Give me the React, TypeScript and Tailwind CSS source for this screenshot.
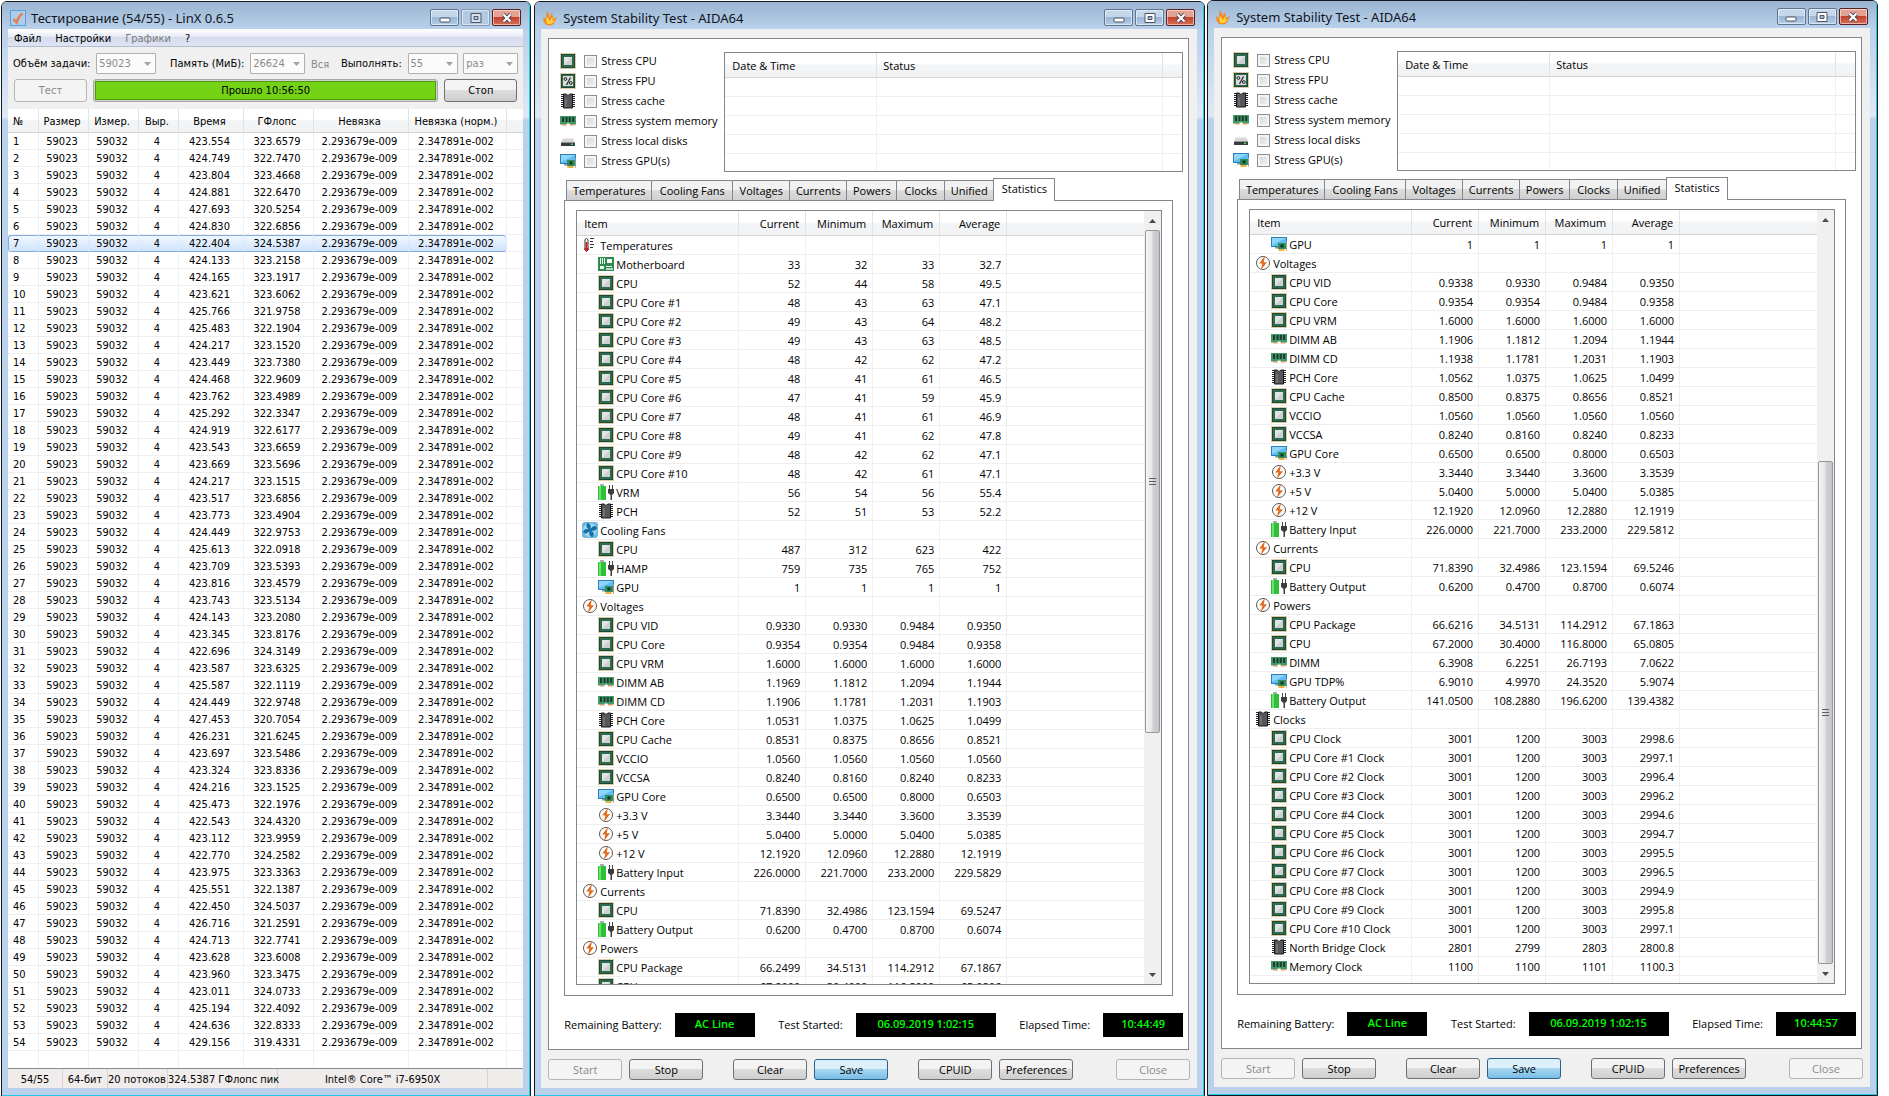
import type { ReactNode } from 'react'
import clsx from 'clsx'

type IconName = 'cpu' | 'fpu' | 'chip' | 'ram' | 'disk' | 'gpu' | 'temp' | 'board' | 'battery' | 'fan' | 'volt'

// [time, gflops] for every finished run
const RUNS = `423.554 323.6579|424.749 322.7470|423.804 323.4668|424.881 322.6470|427.693 320.5254|424.830 322.6856
422.404 324.5387|424.133 323.2158|424.165 323.1917|423.621 323.6062|425.766 321.9758|425.483 322.1904
424.217 323.1520|423.449 323.7380|424.468 322.9609|423.762 323.4989|425.292 322.3347|424.919 322.6177
423.543 323.6659|423.669 323.5696|424.217 323.1515|423.517 323.6856|423.773 323.4904|424.449 322.9753
425.613 322.0918|423.709 323.5393|423.816 323.4579|423.743 323.5134|424.143 323.2080|423.345 323.8176
422.696 324.3149|423.587 323.6325|425.587 322.1119|424.449 322.9748|427.453 320.7054|426.231 321.6245
423.697 323.5486|423.324 323.8336|424.216 323.1525|425.473 322.1976|422.543 324.4320|423.112 323.9959
422.770 324.2582|423.975 323.3363|425.551 322.1387|422.450 324.5037|426.716 321.2591|424.713 322.7741
423.628 323.6008|423.960 323.3475|423.011 324.0733|425.194 322.4092|424.636 322.8333|429.156 319.4331`
  .split(/[|\n]/)
  .map(r => r.trim().split(' '))

const STATS_A = `temp;Temperatures
board;Motherboard;33;32;33;32.7
cpu;CPU;52;44;58;49.5
cpu;CPU Core #1;48;43;63;47.1
cpu;CPU Core #2;49;43;64;48.2
cpu;CPU Core #3;49;43;63;48.5
cpu;CPU Core #4;48;42;62;47.2
cpu;CPU Core #5;48;41;61;46.5
cpu;CPU Core #6;47;41;59;45.9
cpu;CPU Core #7;48;41;61;46.9
cpu;CPU Core #8;49;41;62;47.8
cpu;CPU Core #9;48;42;62;47.1
cpu;CPU Core #10;48;42;61;47.1
battery;VRM;56;54;56;55.4
chip;PCH;52;51;53;52.2
fan;Cooling Fans
cpu;CPU;487;312;623;422
battery;HAMP;759;735;765;752
gpu;GPU;1;1;1;1
volt;Voltages
cpu;CPU VID;0.9330;0.9330;0.9484;0.9350
cpu;CPU Core;0.9354;0.9354;0.9484;0.9358
cpu;CPU VRM;1.6000;1.6000;1.6000;1.6000
ram;DIMM AB;1.1969;1.1812;1.2094;1.1944
ram;DIMM CD;1.1906;1.1781;1.2031;1.1903
chip;PCH Core;1.0531;1.0375;1.0625;1.0499
cpu;CPU Cache;0.8531;0.8375;0.8656;0.8521
cpu;VCCIO;1.0560;1.0560;1.0560;1.0560
cpu;VCCSA;0.8240;0.8160;0.8240;0.8233
gpu;GPU Core;0.6500;0.6500;0.8000;0.6503
volt;+3.3 V;3.3440;3.3440;3.3600;3.3539
volt;+5 V;5.0400;5.0000;5.0400;5.0385
volt;+12 V;12.1920;12.0960;12.2880;12.1919
battery;Battery Input;226.0000;221.7000;233.2000;229.5829
volt;Currents
cpu;CPU;71.8390;32.4986;123.1594;69.5247
battery;Battery Output;0.6200;0.4700;0.8700;0.6074
volt;Powers
cpu;CPU Package;66.2499;34.5131;114.2912;67.1867
cpu;CPU;67.2000;30.4000;116.8000;65.0806`

const STATS_B = `gpu;GPU;1;1;1;1
volt;Voltages
cpu;CPU VID;0.9338;0.9330;0.9484;0.9350
cpu;CPU Core;0.9354;0.9354;0.9484;0.9358
cpu;CPU VRM;1.6000;1.6000;1.6000;1.6000
ram;DIMM AB;1.1906;1.1812;1.2094;1.1944
ram;DIMM CD;1.1938;1.1781;1.2031;1.1903
chip;PCH Core;1.0562;1.0375;1.0625;1.0499
cpu;CPU Cache;0.8500;0.8375;0.8656;0.8521
cpu;VCCIO;1.0560;1.0560;1.0560;1.0560
cpu;VCCSA;0.8240;0.8160;0.8240;0.8233
gpu;GPU Core;0.6500;0.6500;0.8000;0.6503
volt;+3.3 V;3.3440;3.3440;3.3600;3.3539
volt;+5 V;5.0400;5.0000;5.0400;5.0385
volt;+12 V;12.1920;12.0960;12.2880;12.1919
battery;Battery Input;226.0000;221.7000;233.2000;229.5812
volt;Currents
cpu;CPU;71.8390;32.4986;123.1594;69.5246
battery;Battery Output;0.6200;0.4700;0.8700;0.6074
volt;Powers
cpu;CPU Package;66.6216;34.5131;114.2912;67.1863
cpu;CPU;67.2000;30.4000;116.8000;65.0805
ram;DIMM;6.3908;6.2251;26.7193;7.0622
gpu;GPU TDP%;6.9010;4.9970;24.3520;5.9074
battery;Battery Output;141.0500;108.2880;196.6200;139.4382
chip;Clocks
cpu;CPU Clock;3001;1200;3003;2998.6
cpu;CPU Core #1 Clock;3001;1200;3003;2997.1
cpu;CPU Core #2 Clock;3001;1200;3003;2996.4
cpu;CPU Core #3 Clock;3001;1200;3003;2996.2
cpu;CPU Core #4 Clock;3001;1200;3003;2994.6
cpu;CPU Core #5 Clock;3001;1200;3003;2994.7
cpu;CPU Core #6 Clock;3001;1200;3003;2995.5
cpu;CPU Core #7 Clock;3001;1200;3003;2996.5
cpu;CPU Core #8 Clock;3001;1200;3003;2994.9
cpu;CPU Core #9 Clock;3001;1200;3003;2995.8
cpu;CPU Core #10 Clock;3001;1200;3003;2997.1
chip;North Bridge Clock;2801;2799;2803;2800.8
ram;Memory Clock;1100;1100;1101;1100.3`

const STRESS: [IconName, string][] = [
  ['cpu', 'Stress CPU'],
  ['fpu', 'Stress FPU'],
  ['chip', 'Stress cache'],
  ['ram', 'Stress system memory'],
  ['disk', 'Stress local disks'],
  ['gpu', 'Stress GPU(s)'],
]

const TABS = [
  ['Temperatures', 'w-[86px]'],
  ['Cooling Fans', 'w-[82px]'],
  ['Voltages', 'w-[58px]'],
  ['Currents', 'w-[58px]'],
  ['Powers', 'w-[51px]'],
  ['Clocks', 'w-[49px]'],
  ['Unified', 'w-[50px]'],
  ['Statistics', 'w-[62px]'],
]

function Icon({ name }: { name: IconName }) {
  return (
    <svg width="16" height="16" viewBox="0 0 16 16" className="block shrink-0" aria-hidden="true">
      {(name === 'cpu' || name === 'fpu') && (
        <>
          <rect x="0.5" y="0.5" width="15" height="15" fill="none" stroke="#b9974a" strokeDasharray="1 1" />
          <rect x="1" y="1" width="14" height="14" fill="#2f6a50" />
          <rect x="1.5" y="1.5" width="13" height="13" fill="none" stroke="#1d4a37" />
          <rect x="4" y="4" width="8" height="8" fill="#e2e4e2" />
          <path d="M12 4v8H4z" fill="#cdd1ce" />
        </>
      )}
      {name === 'fpu' && (
        <>
          <rect x="3" y="3" width="10" height="10" fill="#d9dcda" />
          <path d="M10.5 4.5l-4 7.5" stroke="#222" strokeWidth="1.2" />
          <circle cx="5.4" cy="6" r="1.4" fill="none" stroke="#222" />
          <circle cx="10.8" cy="10" r="1.4" fill="none" stroke="#222" />
        </>
      )}
      {name === 'chip' && (
        <>
          <path d="M2 1v14M14 1v14" stroke="#222" strokeWidth="2" strokeDasharray="1 1" />
          <path d="M3.500 1H6q2 3 4 0h2.500v14h-9z" fill="#55575b" stroke="#17181a" />
          <path d="M5 5h2v9H5z" fill="#6d6f73" />
        </>
      )}
      {name === 'ram' && (
        <>
          <path d="M0 3h16v8.500H9.500v-1h-3v1H0z" fill="#3f9a68" />
          <path d="M2 4h2v5H2zM5.500 4h2v5h-2zM8.800 4h2v5h-2zM12.200 4h2v5h-2z" fill="#1f3a2e" />
          <path d="M2 11h4.500v1.500H2zM10 11h4.500v1.500H10z" fill="#d99a66" />
        </>
      )}
      {name === 'disk' && (
        <>
          <path d="M2.500 5.500h11L15 9.500H1z" fill="#d8d8da" />
          <rect x="1" y="9.500" width="14" height="3.500" rx="0.500" fill="#3a3c3f" />
          <rect x="11" y="10.500" width="2" height="1.500" fill="#35e04a" />
        </>
      )}
      {name === 'gpu' && (
        <>
          <rect x="0.500" y="1.500" width="15" height="9" fill="#5dbcf2" stroke="#2f7fb8" />
          <path d="M1 2h14L1 9z" fill="#8ed5fa" />
          <path d="M4 11h4v1.500H4z" fill="#8c9296" />
          <rect x="7" y="7" width="8" height="6" fill="#2f8f5c" />
          <rect x="9.500" y="8.500" width="3" height="3" fill="#12392a" />
          <path d="M15.500 5.500v9" stroke="#9a9ea2" />
          <path d="M7.500 13h6v2h-6z" fill="#f0b23c" />
        </>
      )}
      {name === 'temp' && (
        <>
          <path d="M3 10V2.500q1.500-2 3 0V10q1.500 3-1.500 4.500Q1.500 13 3 10z" fill="#fff" stroke="#333" />
          <path d="M4.500 5v8" stroke="#e01414" strokeWidth="1.600" />
          <circle cx="4.500" cy="12.300" r="1.800" fill="#e01414" />
          <path d="M8 1.500h4M8 4.500h3M8 7.500h4M8 10.500h3" stroke="#333" />
        </>
      )}
      {name === 'board' && (
        <>
          <rect x="0" y="1" width="16" height="14" fill="#2e8b50" />
          <path d="M2 2h1v6H2zM4 2h1v6H4zM6 2h1v6H6zM9 3h5v4H9zM2 10h4v3H2zM8 10h6v1H8z" fill="#f2f8f4" />
          <path d="M8 12h7v2H8z" fill="#b9d2c2" />
        </>
      )}
      {name === 'battery' && (
        <>
          <rect x="2" y="0" width="4" height="2" fill="#a9adb0" />
          <rect x="0" y="2" width="8" height="14" fill="#2fbf3a" />
          <rect x="1" y="2" width="2" height="14" fill="#6fe06f" />
          <path d="M11.500 1v4M14.500 1v4" stroke="#444" />
          <path d="M10 5h6v4l-2 2v5h-1.500v-5l-2.500-2z" fill="#3d3d3d" />
        </>
      )}
      {name === 'fan' && (
        <>
          <rect x="0" y="0" width="16" height="16" rx="3" fill="#6db7de" />
          <circle cx="8" cy="8" r="7" fill="#9fd3ec" />
          <path
            d="M8 8Q3.500 5 5.500 1.500 9 1 8 8M8 8q4-5.500 6.500-2.500Q15 9 8 8M8 8q5 3 2.500 6.500Q7 15 8 8M8 8q-4.500 5-6.500 2Q2 6.500 8 8"
            fill="#1272a8"
            stroke="#1272a8"
          />
        </>
      )}
      {name === 'volt' && (
        <>
          <circle cx="8" cy="8" r="6.500" fill="#fff" stroke="#5b5550" />
          <path d="M10 1L4.200 8.600h3.200L5.800 15 12 7.200H8.700z" fill="#e0691e" />
        </>
      )}
    </svg>
  )
}

function Flame() {
  return (
    <svg width="15" height="16" viewBox="0 0 15 16" aria-hidden="true">
      <path
        d="M3.500 15Q-.5 12 .5 7q1.200.5 2.200 3Q3.200 5 4 1q2 2 2.500 6.500Q8.500 5 8 3q2.500 2 2.200 6 2-1 4.300-2.500-2 2.500-2.500 5-.5 2.500-4 4z"
        fill="#f58a1f"
      />
      <path d="M4.500 14q-2-3-.2-7.500Q6 9 6.500 11 8.500 9 9.200 6.500q.5 3 .3 4.500l2-1q-.5 4.500-7 4z" fill="#ffd23c" />
    </svg>
  )
}

function LinxLogo() {
  return (
    <svg width="16" height="16" viewBox="0 0 16 16" aria-hidden="true">
      <rect x="0.500" y="0.500" width="15" height="15" fill="#b4cbe4" stroke="#4ba3e6" />
      <path d="M3.500 9l3 3.500q2-6 6-9" fill="none" stroke="#e0805a" strokeWidth="2.400" />
    </svg>
  )
}

const CAPTION_BTN =
  'flex h-[17px] w-[29px] items-center justify-center rounded-[2px] border shadow-[inset_0_0_0_1px_rgba(255,255,255,0.5)]'

function CaptionButtons({ maxDisabled }: { maxDisabled?: boolean }) {
  return (
    <div className="flex gap-[2px]">
      <button aria-label="Minimize" className={clsx(CAPTION_BTN, 'border-[#5d7590] bg-[linear-gradient(#c5d7ea_45%,#9cb6d3_50%,#b5cde6)]')}>
        <svg width="12" height="10" viewBox="0 0 12 10">
          <rect x="1" y="5" width="10" height="4" rx="1" fill="#fff" stroke="#4c5563" />
        </svg>
      </button>
      <button
        aria-label="Maximize"
        disabled={maxDisabled}
        className={clsx(CAPTION_BTN, maxDisabled ? 'border-[#8098b4] bg-[#b3cae3]' : 'border-[#5d7590] bg-[linear-gradient(#c5d7ea_45%,#9cb6d3_50%,#b5cde6)]')}
      >
        <svg width="12" height="10" viewBox="0 0 12 10">
          <path d="M1 .5h10v9H1zM4 3.500h4v3H4z" fillRule="evenodd" fill={maxDisabled ? '#d5e0ec' : '#fff'} stroke="#4c5563" />
        </svg>
      </button>
      <button aria-label="Close" className={clsx(CAPTION_BTN, 'border-[#5a2020] bg-[linear-gradient(#e3a293_45%,#c4422c_50%,#d5705a)]')}>
        <svg width="12" height="10" viewBox="0 0 12 10">
          <path d="M2.500 1.500l7 7M9.500 1.500l-7 7" stroke="#4d4658" strokeWidth="4" />
          <path d="M2.500 1.500l7 7M9.500 1.500l-7 7" stroke="#fff" strokeWidth="2.200" />
        </svg>
      </button>
    </div>
  )
}

interface WindowProps {
  title: string
  icon: ReactNode
  className: string
  maxDisabled?: boolean
  children: ReactNode
}

function Window({ title, icon, className, maxDisabled, children }: WindowProps) {
  return (
    <section className={clsx('min-w-0 rounded-t-md border border-[#14181f]', className)}>
      <div className="flex h-full flex-col rounded-t-[5px] border-r border-b border-[#22c8e6] bg-[linear-gradient(#9ab4d2_0px,#b9d1ea_27px,#dfe9f5_115px,#b9d1ea_118px)] px-[6px] pb-[7px]">
        <header className="flex h-[27px] items-center gap-[5px] px-[2px] pt-[4px]">
          {icon}
          <h1 className="flex-1 truncate font-['Noto_Sans',sans-serif] text-[13px] leading-4 text-[#10151c]">{title}</h1>
          <CaptionButtons maxDisabled={maxDisabled} />
        </header>
        {children}
      </div>
    </section>
  )
}

function Combo({ label, value, className }: { label: string; value: string; className: string }) {
  return (
    <div className={clsx('relative', className)}>
      <select
        aria-label={label}
        disabled
        className="h-[21px] w-full appearance-none rounded-[1px] border border-[#afafaf] bg-[#fbfbfb] pl-[2px] text-[11px] leading-4 text-[#8a8a8a] opacity-100"
      >
        <option>{value}</option>
      </select>
      <svg width="7" height="4" viewBox="0 0 7 4" className="pointer-events-none absolute top-[9px] right-[5px]">
        <path d="M0 0h7L3.500 4z" fill="#a3a3a3" />
      </svg>
    </div>
  )
}

const RUN_COLS: [string, string][] = [
  ['№', 'w-[31px]'],
  ['Размер', 'w-[50px]'],
  ['Измер.', 'w-[50px]'],
  ['Выр.', 'w-[40px]'],
  ['Время', 'w-[65px]'],
  ['ГФлопс', 'w-[70px]'],
  ['Невязка', 'w-[95px]'],
  ['Невязка (норм.)', 'w-[98px]'],
  ['', ''],
]

function LinxWindow() {
  return (
    <Window
      title="Тестирование (54/55) - LinX 0.6.5"
      icon={<LinxLogo />}
      maxDisabled
      className="mt-px mr-[3px] ml-px flex-[530]"
    >
      <div className="flex flex-1 flex-col overflow-hidden bg-[#f0f0f0] font-['DejaVu_Sans_Condensed','DejaVu_Sans',sans-serif] text-[11px] leading-4 whitespace-nowrap text-black">
        <nav className="flex h-[18px] items-center gap-[14px] border-b border-[#b6bccc] bg-[linear-gradient(#ffffff,#e7ebf6_45%,#d6dcee_50%,#dfe4f4)] px-[6px] pt-[2px]">
          <button>Файл</button>
          <button>Настройки</button>
          <button disabled className="text-[#7b7b7b]">Графики</button>
          <button>?</button>
        </nav>
        <div className="flex items-center justify-between pt-[6px] pr-[5px] pl-[5px]">
          <span>Объём задачи:</span>
          <Combo label="Объём задачи" value="59023" className="w-[60px]" />
          <span className="ml-[8px]">Память (МиБ):</span>
          <Combo label="Память (МиБ)" value="26624" className="w-[55px]" />
          <span className="pt-[3px] text-[#8a8a8a]">Вся</span>
          <span className="ml-[6px]">Выполнять:</span>
          <Combo label="Выполнять" value="55" className="w-[50px]" />
          <Combo label="Единица" value="раз" className="w-[55px]" />
        </div>
        <div className="flex gap-[6px] px-[6px] pt-[5px] pb-[7px]">
          <button disabled className="h-[23px] w-[73px] rounded-[3px] border border-[#b5b5b5] bg-[#f4f4f4] pt-px text-[#8a8a8a]">
            Тест
          </button>
          <div
            role="progressbar"
            aria-valuenow={98}
            aria-valuemin={0}
            aria-valuemax={100}
            className="h-[23px] flex-1 rounded-[3px] border border-[#a9a9a9] bg-[#d0d0d0] p-px"
          >
            <div className="flex h-full items-center justify-center border border-[#4b9b0a] bg-[#73d216] pt-px">Прошло 10:56:50</div>
          </div>
          <button className="h-[23px] w-[73px] rounded-[3px] border border-[#707070] bg-[linear-gradient(#f3f3f3_48%,#dddddd_50%,#cfcfcf)] pt-px">
            Стоп
          </button>
        </div>
        <div className="flex-1 bg-white">
          <table className="w-full table-fixed border-separate border-spacing-0 text-center">
            <colgroup>
              {RUN_COLS.map(([name, w]) => (
                <col key={name} className={w} />
              ))}
            </colgroup>
            <thead>
              <tr>
                {RUN_COLS.map(([name]) => (
                  <th
                    key={name}
                    className="h-[24px] border-r border-b border-r-[#e2e3e5] border-b-[#d5d5d5] bg-[linear-gradient(#ffffff_45%,#f4f5f7_50%,#f1f2f4)] p-0 pt-[2px] pr-[3px] font-normal first:pl-[5px] first:text-left last:border-r-0"
                  >
                    {name}
                  </th>
                ))}
              </tr>
            </thead>
            <tbody>
              {RUNS.map(([time, gflops], i) => {
                const cells = [i + 1, '59023', '59032', '4', time, gflops, '2.293679e-009', '2.347891e-002', '']
                const selected = i === 6
                return (
                  <tr key={i}>
                    {cells.map((c, k) => (
                      <td
                        key={k}
                        className={clsx(
                          'h-[17px] border-r border-b border-[#efefef] p-0 pt-[2px] pr-[3px] leading-[14px] first:pl-[5px] first:text-left last:border-r-0',
                          selected && k < 8 && 'border-r-[#dbe8f8] border-b-[#84acdd] bg-[linear-gradient(#f2f8ff,#cfe3fc)] shadow-[inset_0_1px_0_#84acdd]',
                          selected && k === 0 && 'rounded-l-[3px] shadow-[inset_1px_1px_0_#84acdd]',
                          selected && k === 7 && 'rounded-r-[3px] border-r-[#84acdd]',
                        )}
                      >
                        {c}
                      </td>
                    ))}
                  </tr>
                )
              })}
              <tr>
                {RUN_COLS.map(([name]) => (
                  <td key={name} className="h-[17px] border-r border-[#efefef] p-0 last:border-r-0" />
                ))}
              </tr>
            </tbody>
          </table>
        </div>
        <footer className="flex h-[20px] items-center border-t border-[#8a8a8a] bg-[#f0eceb] text-center leading-[19px]">
          <span className="w-[55px] border-r border-[#d5d2d1] pt-px">54/55</span>
          <span className="w-[45px] border-r border-[#d5d2d1] pt-px">64-бит</span>
          <span className="w-[60px] border-r border-[#d5d2d1] pt-px text-left">20 потоков</span>
          <span className="w-[110px] border-r border-[#d5d2d1] pt-px">324.5387 ГФлопс пик</span>
          <span className="flex-1 border-r border-[#d5d2d1] pt-px">Intel® Core™ i7-6950X</span>
          <span className="w-[35px]" />
        </footer>
      </div>
    </Window>
  )
}

const HEAD_CELL =
  'h-[25px] border-r border-b border-r-[#e2e3e5] border-b-[#d5d5d5] bg-[linear-gradient(#ffffff_45%,#f4f5f7_50%,#f1f2f4)] p-0 pt-[2px] font-normal last:border-r-0'
const GROUPS = ['Temperatures', 'Cooling Fans', 'Voltages', 'Currents', 'Powers', 'Clocks']

function StatsTable({ data }: { data: string }) {
  const rows = data.split('\n').map(r => r.split(';'))
  return (
    <table className="w-full table-fixed border-separate border-spacing-0">
      <colgroup>
        <col className="w-[162px]" />
        <col className="w-[67px]" />
        <col className="w-[67px]" />
        <col className="w-[67px]" />
        <col className="w-[67px]" />
        <col />
      </colgroup>
      <thead>
        <tr>
          <th className={clsx(HEAD_CELL, 'pl-[7px] text-left')}>Item</th>
          {['Current', 'Minimum', 'Maximum', 'Average'].map(h => (
            <th key={h} className={clsx(HEAD_CELL, 'pr-[6px] text-right')}>{h}</th>
          ))}
          <th className={HEAD_CELL} />
        </tr>
      </thead>
      <tbody>
        {rows.map(([icon, name, ...values], i) => (
          <tr key={i}>
            <td className="h-[19px] border-r border-b border-[#efefef] p-0">
              <div className={clsx('flex items-center gap-[2px]', GROUPS.includes(name) ? 'pl-[5px]' : 'pl-[21px]')}>
                <Icon name={icon as IconName} />
                <span className="pt-[2px]">{name}</span>
              </div>
            </td>
            {[0, 1, 2, 3].map(k => (
              <td key={k} className="border-r border-b border-[#efefef] p-0 pt-[2px] pr-[5px] text-right">
                {values[k]}
              </td>
            ))}
            <td className="border-b border-[#efefef] p-0" />
          </tr>
        ))}
        <tr>
          {[0, 1, 2, 3, 4, 5].map(k => (
            <td key={k} className="h-[19px] border-r border-[#efefef] p-0 last:border-r-0" />
          ))}
        </tr>
      </tbody>
    </table>
  )
}

function ScrollBar({ atEnd }: { atEnd?: boolean }) {
  return (
    <div className="flex w-[17px] flex-col items-center bg-[#f0f0f0]">
      <svg width="7" height="19" viewBox="0 0 7 19" className="shrink-0">
        <path d="M3.500 8L7 12H0z" fill="#4a4a4a" />
      </svg>
      <div className={atEnd ? 'flex-[232]' : 'flex-none'} />
      <div className="flex w-[15px] flex-[502] flex-col items-center justify-center gap-[2px] rounded-[2px] border border-[#979797] bg-[linear-gradient(90deg,#f5f5f5,#e6e6e8_45%,#cfd0d4_55%,#c4c5ca)]">
        <div className="h-px w-[7px] bg-[#5f5f5f]" />
        <div className="h-px w-[7px] bg-[#5f5f5f]" />
        <div className="h-px w-[7px] bg-[#5f5f5f]" />
      </div>
      <div className={atEnd ? 'flex-none' : 'flex-[232]'} />
      <svg width="7" height="19" viewBox="0 0 7 19" className="shrink-0">
        <path d="M3.500 12L7 8H0z" fill="#4a4a4a" />
      </svg>
    </div>
  )
}

function Readout({ label, value, className }: { label: string; value: string; className: string }) {
  return (
    <div className="flex items-center gap-[13px]">
      <span>{label}</span>
      <output className={clsx('h-[24px] bg-black text-center leading-[22px] font-semibold text-[#00ff00]', className)}>{value}</output>
    </div>
  )
}

function PushButton({ children, disabled, primary }: { children: string; disabled?: boolean; primary?: boolean }) {
  return (
    <button
      disabled={disabled}
      className={clsx(
        'h-[21px] w-[74px] rounded-[3px] border pt-px leading-[18px]',
        disabled && 'border-[#b0b5b5] bg-[#f4f4f4] text-[#8a8a8a]',
        primary && 'border-[#2c628b] bg-[linear-gradient(#dcf0fb_45%,#a8d8f2_50%,#78bde4)]',
        !disabled && !primary && 'border-[#707070] bg-[linear-gradient(#f3f3f3_48%,#dddddd_50%,#cfcfcf)]',
      )}
    >
      {children}
    </button>
  )
}

interface AidaProps {
  data: string
  elapsed: string
  atEnd?: boolean
  className: string
}

function AidaWindow({ data, elapsed, atEnd, className }: AidaProps) {
  return (
    <Window title="System Stability Test - AIDA64" icon={<Flame />} className={className}>
      <div className="flex flex-1 flex-col bg-[#f0f0f0] px-[7px] pt-[9px] pb-[8px] font-['Open_Sans','Noto_Sans',sans-serif] text-[11px] leading-4 whitespace-nowrap text-black">
        <main className="mr-px border border-[#82868f] bg-white pb-[12px]">
          <div className="flex pt-[12px] pr-[5px] pl-[11px]">
            <div className="w-[164px] shrink-0">
              {STRESS.map(([icon, label]) => (
                <label key={label} className="flex h-[20px] items-center">
                  <Icon name={icon} />
                  <input
                    type="checkbox"
                    className="mr-[4px] ml-[8px] h-[13px] w-[13px] shrink-0 appearance-none border border-[#8e8f8f] bg-[linear-gradient(135deg,#cfd3d8,#f6f6f6)] shadow-[inset_0_0_0_2px_#f4f4f4]"
                  />
                  {label}
                </label>
              ))}
            </div>
            <div className="mt-px h-[120px] flex-1 overflow-hidden border border-[#82868f] bg-white">
              <table className="w-full table-fixed border-separate border-spacing-0 text-left">
                <colgroup>
                  <col className="w-[152px]" />
                  <col />
                  <col className="w-[19px]" />
                </colgroup>
                <thead>
                  <tr>
                    <th className={clsx(HEAD_CELL, 'pl-[7px]')}>Date &amp; Time</th>
                    <th className={clsx(HEAD_CELL, 'pl-[6px]')}>Status</th>
                    <th className={HEAD_CELL} />
                  </tr>
                </thead>
                <tbody>
                  {[0, 1, 2, 3, 4].map(r => (
                    <tr key={r}>
                      <td className="h-[19px] border-r border-b border-[#efefef] p-0" />
                      <td className="border-r border-b border-[#efefef] p-0" />
                      <td className="border-b border-[#efefef] p-0" />
                    </tr>
                  ))}
                </tbody>
              </table>
            </div>
          </div>
          <div role="tablist" className="relative mt-[6px] flex items-end pl-[17px]">
            {TABS.map(([name, w]) => {
              const active = name === 'Statistics'
              return (
                <button
                  key={name}
                  role="tab"
                  aria-selected={active}
                  className={clsx(
                    'border border-[#82868f]',
                    w,
                    active
                      ? '-mb-px h-[23px] border-b-0 bg-white pb-[2px]'
                      : '-mr-px h-[20px] border-b-0 bg-[linear-gradient(#f2f2f2_45%,#dddddd_50%,#cfcfcf)] pt-px',
                  )}
                >
                  {name}
                </button>
              )
            })}
          </div>
          <div className="mx-[15px] border border-[#82868f] pt-[9px] pr-[10px] pb-[10px] pl-[11px]">
            <div className="flex h-[775px] border border-[#82868f]">
              <div className="min-w-0 flex-1 overflow-hidden">
                <StatsTable data={data} />
              </div>
              <ScrollBar atEnd={atEnd} />
            </div>
          </div>
          <div className="mt-[17px] flex justify-between pr-[5px] pl-[15px]">
            <Readout label="Remaining Battery:" value="AC Line" className="w-[80px]" />
            <Readout label="Test Started:" value="06.09.2019 1:02:15" className="w-[140px]" />
            <Readout label="Elapsed Time:" value={elapsed} className="w-[80px]" />
          </div>
        </main>
        <footer className="mt-[9px] flex gap-[7px]">
          <PushButton disabled>Start</PushButton>
          <PushButton>Stop</PushButton>
          <div className="w-[16px]" />
          <PushButton>Clear</PushButton>
          <PushButton primary>Save</PushButton>
          <div className="w-[16px]" />
          <PushButton>CPUID</PushButton>
          <PushButton>Preferences</PushButton>
          <div className="flex-1" />
          <PushButton disabled>Close</PushButton>
        </footer>
      </div>
    </Window>
  )
}

export default function App() {
  return (
    <div className="flex items-stretch bg-white pr-[11px]">
      <LinxWindow />
      <AidaWindow data={STATS_A} elapsed="10:44:49" className="mt-px mr-[2px] flex-[671]" />
      <AidaWindow data={STATS_B} elapsed="10:44:57" atEnd className="mb-px flex-[671]" />
    </div>
  )
}
